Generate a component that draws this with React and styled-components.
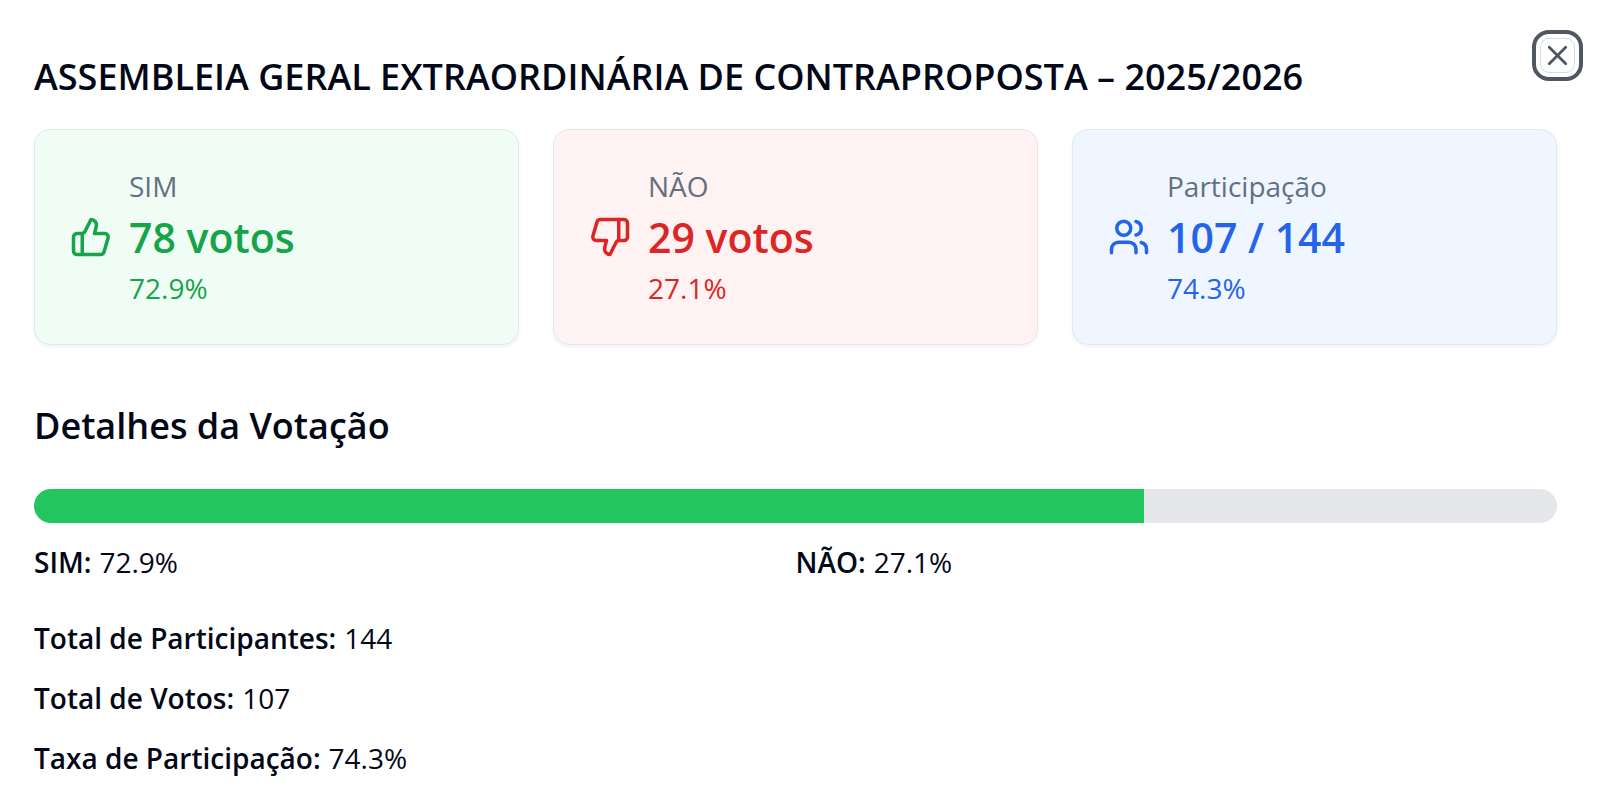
import React from "react";
import styled, { createGlobalStyle } from "styled-components";
import { ThumbsUp, ThumbsDown, Users, X } from "lucide-react";

const GlobalStyle = createGlobalStyle`
  *, *::before, *::after { box-sizing: border-box; }
  body {
    margin: 0;
    background: #ffffff;
    color: #020817;
    font-family: "Segoe UI", "Open Sans", "Noto Sans", sans-serif;
    font-size: 28px;
    line-height: 42px;
  }
  h2, h3, p, dl, dt, dd { margin: 0; }
`;

const Dialog = styled.main`
  position: relative;
  display: flex;
  flex-direction: column;
  padding: 56px 43px 20px 34px;
`;

const Title = styled.h2`
  font-size: 36px;
  font-weight: 600;
  line-height: 42px;
`;

const CloseButton = styled.button`
  position: absolute;
  top: 30px;
  right: 17px;
  display: flex;
  align-items: center;
  justify-content: center;
  width: 51px;
  height: 51px;
  padding: 0;
  border: 4px solid #505763;
  border-radius: 17px;
  background: #ffffff;
  color: #4b5563;
  cursor: pointer;

  &::before {
    content: "";
    position: absolute;
    inset: 4px;
    border: 1px solid #d9dade;
    border-radius: 9px;
  }
`;

const Cards = styled.div`
  display: grid;
  grid-template-columns: repeat(3, 1fr);
  gap: 34px;
  margin-top: 31px;
`;

const Card = styled.section`
  display: flex;
  align-items: center;
  gap: 17px;
  padding: 35px;
  border: 1px solid #e2e8f0;
  border-radius: 16px;
  background: ${(p) => p.$background};
  color: ${(p) => p.$color};
  box-shadow: 0 2px 4px rgba(0, 0, 0, 0.05);
`;

const CardLabel = styled.p`
  color: #64707f;
`;

const CardValue = styled.p`
  font-size: 41px;
  font-weight: 600;
  line-height: 60px;
`;

const SectionTitle = styled.h3`
  margin-top: 60px;
  font-size: 36px;
  font-weight: 600;
  line-height: 42px;
`;

const Track = styled.div`
  height: 34px;
  margin-top: 42px;
  overflow: hidden;
  border-radius: 17px;
  background: #e5e7eb;
`;

const Fill = styled.div`
  height: 100%;
  background: #22c55e;
`;

const Split = styled.dl`
  display: grid;
  grid-template-columns: 1fr 1fr;
  margin-top: 18px;
`;

const Totals = styled.dl`
  display: flex;
  flex-direction: column;
  gap: 18px;
  margin-top: 34px;
`;

const Entry = styled.div`
  display: flex;
  gap: 8px;

  dt { font-weight: 600; }
`;

const cards = [
  { label: "SIM", value: "78 votos", share: "72.9%", icon: ThumbsUp, color: "#16a34a", background: "#f0fdf4" },
  { label: "NÃO", value: "29 votos", share: "27.1%", icon: ThumbsDown, color: "#dc2626", background: "#fef2f2" },
  { label: "Participação", value: "107 / 144", share: "74.3%", icon: Users, color: "#2563eb", background: "#eff6ff" },
];

const totals = [
  ["Total de Participantes:", "144"],
  ["Total de Votos:", "107"],
  ["Taxa de Participação:", "74.3%"],
];

const yesShare = 72.9;

export default function App() {
  return (
    <>
      <GlobalStyle />
      <Dialog>
        <Title>ASSEMBLEIA GERAL EXTRAORDINÁRIA DE CONTRAPROPOSTA – 2025/2026</Title>
        <CloseButton type="button" aria-label="Fechar">
          <X size={33} strokeWidth={2} aria-hidden="true" />
        </CloseButton>
        <Cards>
          {cards.map(({ label, value, share, icon: Icon, color, background }) => (
            <Card key={label} $color={color} $background={background}>
              <Icon size={42} aria-hidden="true" />
              <div>
                <CardLabel>{label}</CardLabel>
                <CardValue>{value}</CardValue>
                <p>{share}</p>
              </div>
            </Card>
          ))}
        </Cards>
        <SectionTitle>Detalhes da Votação</SectionTitle>
        <Track role="progressbar" aria-label="Votos SIM" aria-valuenow={yesShare} aria-valuemin={0} aria-valuemax={100}>
          <Fill style={{ width: `${yesShare}%` }} />
        </Track>
        <Split>
          <Entry><dt>SIM:</dt><dd>72.9%</dd></Entry>
          <Entry><dt>NÃO:</dt><dd>27.1%</dd></Entry>
        </Split>
        <Totals>
          {totals.map(([name, value]) => (
            <Entry key={name}><dt>{name}</dt><dd>{value}</dd></Entry>
          ))}
        </Totals>
      </Dialog>
    </>
  );
}
